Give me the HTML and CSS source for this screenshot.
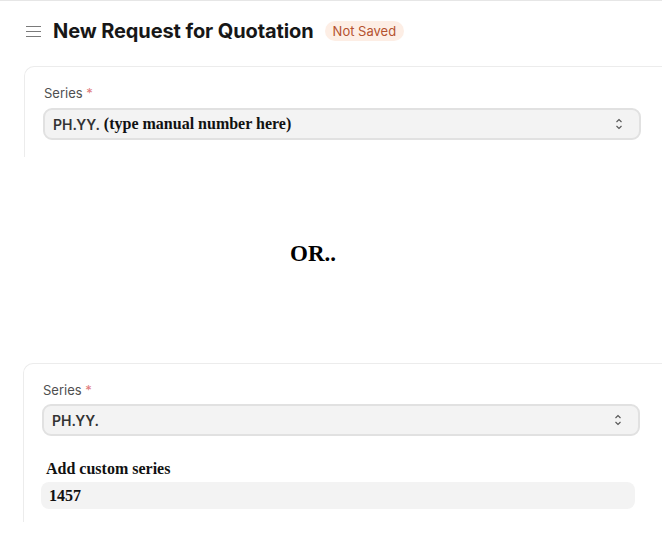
FILE: index.html
```html
<!DOCTYPE html>
<html>
<head>
<meta charset="utf-8">
<link rel="stylesheet" href="styles.css">
</head>
<body>
<div class="topline"></div>
<header class="page-head">
  <svg class="burger" width="15" height="13" viewBox="0 0 15 13"><path d="M0 1.5H15M0 6.5H15M0 11.5H15" stroke="#7a7a7a" stroke-width="1.2"/></svg>
  <h1 class="title">New Request for Quotation</h1>
  <span class="badge">Not Saved</span>
</header>
<section class="card card-one">
  <div class="label">Series <span class="req">*</span></div>
  <div class="select"><span class="sval">PH.YY.</span><span class="manual">(type manual number here)</span>
    <svg class="chev" width="8" height="12" viewBox="0 0 8 12"><path d="M1.5 4L4 1.5L6.5 4M1.5 8L4 10.5L6.5 8" fill="none" stroke="#555" stroke-width="1.1"/></svg>
  </div>
</section>
<div class="or">OR..</div>
<section class="card card-two">
  <div class="label">Series <span class="req">*</span></div>
  <div class="select"><span class="sval">PH.YY.</span>
    <svg class="chev" width="8" height="12" viewBox="0 0 8 12"><path d="M1.5 4L4 1.5L6.5 4M1.5 8L4 10.5L6.5 8" fill="none" stroke="#555" stroke-width="1.1"/></svg>
  </div>
  <div class="custom-label">Add custom series</div>
  <div class="custom-input">1457</div>
</section>
</body>
</html>
```
FILE: styles.css
```css
* { box-sizing: border-box; }
body {
  margin: 0;
  width: 666px;
  height: 539px;
  background: #fff;
  font-family: Inter, "Noto Sans", sans-serif;
  overflow: hidden;
}
.topline {
  width: 662px;
  height: 1px;
  background: #e6e6e6;
}
.page-head {
  display: flex;
  align-items: center;
  height: 60px;
  padding-left: 26px;
}
.burger { flex: none; margin-right: 12px; margin-top: 1px; }
.title {
  margin: 0;
  font-size: 20px;
  font-weight: 700;
  color: #171717;
  letter-spacing: -0.1px;
}
.badge {
  margin-left: 11px;
  background: #fdeee5;
  color: #b5522f;
  font-size: 13px;
  padding: 3px 8px;
  border-radius: 10px;
  line-height: 14px;
}
.card {
  margin-left: 24px;
  width: 638px;
  border-top: 1px solid #ececec;
  border-left: 1px solid #ececec;
  border-top-left-radius: 10px;
  padding-left: 19px;
}
.card-one {
  margin-top: 5px;
  height: 91px;
  padding-top: 18px;
}
.card-one .label { height: 23px; }
.card-two {
  margin-left: 23px;
  width: 639px;
  height: 159px;
  padding-top: 18px;
}
.label {
  font-size: 13px;
  color: #4f4f4f;
  line-height: 16px;
  height: 22px;
}
.req { color: #e07b7b; }
.select {
  margin-left: -1px;
  width: 598px;
  height: 32px;
  background: #f3f3f3;
  border: 2px solid #e1e1e1;
  border-radius: 9px;
  display: flex;
  align-items: center;
  padding-left: 8px;
}
.sval {
  font-size: 14px;
  font-weight: 600;
  color: #333;
}
.manual {
  font-family: "Liberation Serif", serif;
  font-weight: 700;
  font-size: 16px;
  color: #111;
  margin-left: 4px;
}
.chev { margin-left: auto; margin-right: 16px; }
.or {
  height: 206px;
  display: flex;
  align-items: center;
  justify-content: center;
  padding-right: 40px;
  padding-bottom: 12px;
  font-family: "Liberation Serif", serif;
  font-weight: 700;
  font-size: 23px;
  color: #000;
}
.custom-label {
  margin-top: 23px;
  margin-left: 3px;
  font-family: "Liberation Serif", serif;
  font-weight: 700;
  font-size: 16px;
  line-height: 19px;
  color: #111;
}
.custom-input {
  margin-top: 4px;
  margin-left: -2px;
  width: 594px;
  height: 27px;
  background: #f3f3f3;
  border-radius: 8px;
  padding-left: 8px;
  display: flex;
  align-items: center;
  font-family: "Liberation Serif", serif;
  font-weight: 700;
  font-size: 16px;
  color: #111;
}
```
